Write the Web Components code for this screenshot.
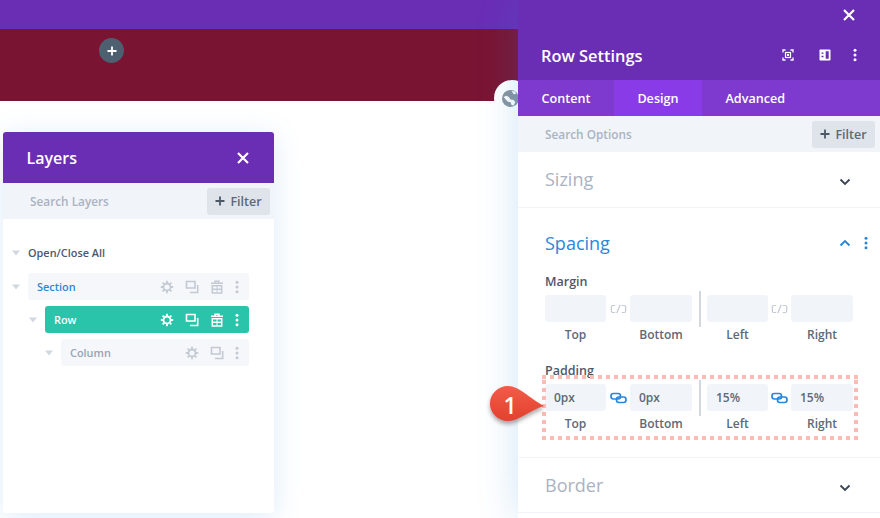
<!DOCTYPE html>
<html>
<head>
<meta charset="utf-8">
<style>
  html, body { margin: 0; padding: 0; width: 880px; height: 518px; overflow: hidden; background: #fff; }
  body { font-family: "Open Sans", sans-serif; }
</style>
</head>
<body>
<app-shell>
  <layers-window slot="canvas"></layers-window>
  <settings-panel slot="panel"></settings-panel>
</app-shell>

<script>
const icons = {
  close: `<svg viewBox="0 0 14 14" width="14" height="14"><path d="M2 2l10 10M12 2L2 12" stroke="currentColor" stroke-width="2.2" fill="none"/></svg>`,
  plus: `<svg viewBox="0 0 10 10" width="10" height="10"><path d="M5 .5v9M.5 5h9" stroke="currentColor" stroke-width="1.8" fill="none"/></svg>`,
  gear: `<svg viewBox="0 0 14 14" width="14" height="14"><circle cx="7" cy="7" r="3.5" fill="none" stroke="currentColor" stroke-width="1.8"/><path d="M7 .8v2.2M7 11v2.2M.8 7H3M11 7h2.200M2.600 2.600l1.500 1.500M9.900 9.900l1.500 1.500M11.400 2.600L9.900 4.100M4.100 9.900l-1.500 1.500" stroke="currentColor" stroke-width="1.800" fill="none"/></svg>`,
  copy: `<svg viewBox="0 0 14 14" width="14" height="14"><path d="M1.500 1.500H10V8H1.500z" fill="none" stroke="currentColor" stroke-width="1.600"/><path d="M12.700 5v7.500H5" fill="none" stroke="currentColor" stroke-width="1.600"/></svg>`,
  trash: `<svg viewBox="0 0 14 14" width="14" height="14"><path d="M1 3.300h12M5 3V1.200h4V3" fill="none" stroke="currentColor" stroke-width="1.400"/><path d="M2.300 5.700h9.400V13H2.300z" fill="none" stroke="currentColor" stroke-width="1.500"/><path d="M2.300 9.300h9.400" stroke="currentColor" stroke-width="1.500"/><path d="M7 6v6.500" stroke="currentColor" stroke-width="1"/></svg>`,
  dots: `<svg viewBox="0 0 4 14" width="4" height="14"><circle cx="2" cy="2.200" r="1.500" fill="currentColor"/><circle cx="2" cy="7" r="1.500" fill="currentColor"/><circle cx="2" cy="11.800" r="1.500" fill="currentColor"/></svg>`,
  focus: `<svg viewBox="0 0 12 12" width="12" height="12"><path d="M3.500 1H1v2.500M8.500 1H11v2.500M3.500 11H1V8.500M8.500 11H11V8.500" fill="none" stroke="currentColor" stroke-width="1.300"/><rect x="3.500" y="3.500" width="5" height="5" fill="none" stroke="currentColor" stroke-width="1.200"/><rect x="5" y="5" width="2" height="2" fill="currentColor"/></svg>`,
  columns: `<svg viewBox="0 0 12 12" width="12" height="12"><rect x=".5" y=".5" width="11" height="11" rx=".8" fill="currentColor"/><path d="M6.700 2.300h3v7.400h-3zM2.500 3.400h2v1.400h-2zM2.500 6.800h2v1.400h-2z" fill="#6a2eb5"/></svg>`,
  down: `<svg viewBox="0 0 12 8" width="12" height="8"><path d="M1.500 1.500L6 6l4.500-4.500" fill="none" stroke="currentColor" stroke-width="1.900"/></svg>`,
  up: `<svg viewBox="0 0 12 8" width="12" height="8"><path d="M1.500 6.500L6 2l4.500 4.500" fill="none" stroke="currentColor" stroke-width="1.900"/></svg>`,
  caret: `<svg viewBox="0 0 8 6" width="8" height="6"><path d="M0 .5h8L4 5.500z" fill="currentColor"/></svg>`,
  linkOn: `<svg viewBox="0 0 17 12" width="17" height="12"><rect x="1" y="1.500" width="9.500" height="5.500" rx="2.400" fill="none" stroke="currentColor" stroke-width="1.700"/><rect x="6.500" y="5" width="9.500" height="5.500" rx="2.400" fill="none" stroke="currentColor" stroke-width="1.700"/></svg>`,
  linkOff: `<svg viewBox="0 0 17 10" width="17" height="10"><path d="M5.200 1.500H2.800C1.900 1.500 1.300 2.100 1.300 3v4c0 .9.6 1.500 1.500 1.500h2.400M11.800 1.500h2.400c.9 0 1.500.6 1.500 1.500v4c0 .9-.6 1.500-1.500 1.500h-2.400M10.200 .8L6.800 9.200" fill="none" stroke="currentColor" stroke-width="1.200"/></svg>`,
  globe: `<svg viewBox="0 0 16 16" width="17" height="17"><circle cx="8" cy="8" r="8" fill="currentColor"/><path d="M1.500 6.500L4 5.500l2.500 1L8 9l3 .5 1.500 2-1.500 3-2-.5-1-2.500-2.500-.5-2-2zM9 1l3 .5 1.500 2-2.500.5z" fill="#fff"/></svg>`
};

class FilterButton extends HTMLElement {
  constructor() {
    super();
    this.attachShadow({ mode: "open" }).innerHTML = `
    <style>
      :host {
        display: flex; align-items: center; justify-content: center; gap: 5px;
        background: #dfe4ea; color: #5c6978; border-radius: 3px;
        font-size: 12.500px; font-weight: 600;
      }
      span { display: flex; color: #4c5866; }
    </style>
    <span>${icons.plus}</span><slot></slot>`;
  }
}
customElements.define("filter-button", FilterButton);

class SearchBar extends HTMLElement {
  constructor() {
    super();
    this.attachShadow({ mode: "open" }).innerHTML = `
    <style>
      :host {
        display: flex; align-items: center; justify-content: space-between;
        background: #f1f4f9; height: 36px; box-sizing: border-box;
        padding: 0 5px 0 27px; color: #a9b3c1;
        font-size: 11.800px; font-weight: 600;
      }
      filter-button { width: 63px; height: 27px; }
    </style>
    <slot></slot><filter-button>Filter</filter-button>`;
  }
}
customElements.define("search-bar", SearchBar);

class LayerRow extends HTMLElement {
  constructor() {
    super();
    const active = this.hasAttribute("active");
    const noTrash = this.hasAttribute("no-trash");
    this.attachShadow({ mode: "open" }).innerHTML = `
    <style>
      :host {
        display: flex; align-items: center; height: 27px;
        margin-left: ${this.getAttribute("indent") || 0}px;
        margin-bottom: 6px; position: relative;
        font-size: 10.900px; font-weight: 600;
      }
      .caret { width: 16px; flex: none; display: flex; color: #d2d8e0; }
      .bar {
        flex: 1; height: 100%; display: flex; align-items: center;
        box-sizing: border-box; padding: 0 10px 0 9px; border-radius: 3px;
        background: ${active ? "#29c4a9" : "#f5f7fb"};
        color: ${active ? "#fff" : this.getAttribute("color") || "#98a4b3"};
      }
      .name { flex: 1; margin-top: -1px; }
      .tools { display: flex; align-items: center; color: ${active ? "#fff" : "#c3cad4"}; }
      .tools span { display: flex; width: 25px; justify-content: center; }
      .tools span.more { width: 10px; justify-content: flex-end; }
    </style>
    <span class="caret">${icons.caret}</span>
    <div class="bar">
      <span class="name"><slot></slot></span>
      <div class="tools">
        <span>${icons.gear}</span><span>${icons.copy}</span>
        ${noTrash ? "" : `<span>${icons.trash}</span>`}
        <span class="more">${icons.dots}</span>
      </div>
    </div>`;
  }
}
customElements.define("layer-row", LayerRow);

class LayersWindow extends HTMLElement {
  constructor() {
    super();
    this.attachShadow({ mode: "open" }).innerHTML = `
    <style>
      :host {
        display: block; position: absolute; left: 3px; top: 31px;
        width: 271px; height: 381px; background: #fff; border-radius: 3px;
        box-shadow: 0 5px 30px rgba(43,135,218,.16);
      }
      header {
        height: 51px; background: #6a2eb5; color: #fff; border-radius: 3px 3px 0 0;
        display: flex; align-items: center; justify-content: space-between;
        padding: 0 24px 0 23.500px; font-size: 16px; font-weight: 600;
      }
      header span { display: flex; }
      search-bar { padding-right: 4px; }
      .list { padding: 25px 25px 0 9px; }
      .all {
        display: flex; align-items: center; height: 17px; margin-bottom: 12px;
        font-size: 10.900px; font-weight: 600; color: #4c5866;
      }
      .all span { display: flex; width: 16px; color: #d2d8e0; }
    </style>
    <header>Layers<span>${icons.close}</span></header>
    <search-bar>Search Layers</search-bar>
    <div class="list">
      <div class="all"><span>${icons.caret}</span>Open/Close All</div>
      <layer-row color="#2b87da">Section</layer-row>
      <layer-row indent="17" active>Row</layer-row>
      <layer-row indent="33" no-trash>Column</layer-row>
    </div>`;
  }
}
customElements.define("layers-window", LayersWindow);

class SectionHead extends HTMLElement {
  constructor() {
    super();
    const open = this.hasAttribute("open");
    this.attachShadow({ mode: "open" }).innerHTML = `
    <style>
      :host {
        display: flex; align-items: center; justify-content: space-between;
        font-size: 18px; font-weight: 400; color: ${open ? "#2b87da" : "#a9b3c1"};
      }
      .tools {
        display: flex; align-items: center; width: 32px; margin-right: -18px;
        color: ${open ? "#2b87da" : "#3c4654"}; ${open ? "" : "padding-top: 5px;"}
      }
      .tools span { display: flex; }
      .more { margin-left: 13px; }
    </style>
    <slot></slot>
    <div class="tools">
      <span>${open ? icons.up : icons.down}</span>
      ${open ? `<span class="more">${icons.dots}</span>` : ""}
    </div>`;
  }
}
customElements.define("section-head", SectionHead);

class SpacingGroup extends HTMLElement {
  constructor() {
    super();
    const values = (this.getAttribute("values") || ",,,").split(",");
    const linked = this.hasAttribute("linked");
    const names = ["Top", "Bottom", "Left", "Right"];
    const link = `<span class="link">${linked ? icons.linkOn : icons.linkOff}</span>`;
    const input = i => `<div class="input">${values[i]}</div>`;
    const name = i => `<div class="name">${names[i]}</div>`;
    this.attachShadow({ mode: "open" }).innerHTML = `
    <style>
      :host { display: block; position: relative; }
      .title { font-size: 12.500px; font-weight: 600; color: #4c5866; height: 18px; line-height: 18px; margin-bottom: 4px; }
      .grid {
        display: grid; grid-template-columns: 61px 24px 62px 15px 61px 23px 62px;
        grid-template-rows: 27px 25px; align-items: center; justify-items: center;
      }
      .input {
        width: 100%; height: 27px; line-height: 27px; background: #f1f4f9; border-radius: 3px;
        box-sizing: border-box; padding-left: 9px; font-size: 12px; font-weight: 600; color: #5c6978;
      }
      .link { display: flex; color: ${linked ? "#2b87da" : "#c3cad4"}; }
      .name { font-size: 12px; font-weight: 600; color: #5c6978; grid-row: 2; }
      .split { grid-column: 4; grid-row: 1 / 3; width: 2px; height: 36px; background: #d3d8de; align-self: start; margin-top: -4px; }
      ${linked ? `:host::after {
        content: ""; position: absolute; left: -3px; right: -5px; top: 13px; height: 65px;
        pointer-events: none;
        background:
          repeating-linear-gradient(90deg, #fcbcb3 0 4px, transparent 4px 8px) top / 100% 4px no-repeat,
          repeating-linear-gradient(90deg, #fcbcb3 0 4px, transparent 4px 8px) bottom / 100% 4px no-repeat,
          repeating-linear-gradient(0deg, #fcbcb3 0 4px, transparent 4px 8px) left / 4px 100% no-repeat,
          repeating-linear-gradient(0deg, #fcbcb3 0 4px, transparent 4px 8px) right / 4px 100% no-repeat;
      }` : ""}
    </style>
    <div class="title"><slot></slot></div>
    <div class="grid">
      ${input(0)}${link}${input(1)}<div class="split"></div>${input(2)}${link}${input(3)}
      <span style="grid-column:1">${name(0)}</span>
      <span style="grid-column:3">${name(1)}</span>
      <span style="grid-column:5">${name(2)}</span>
      <span style="grid-column:7">${name(3)}</span>
    </div>`;
  }
}
customElements.define("spacing-group", SpacingGroup);

class CalloutMarker extends HTMLElement {
  constructor() {
    super();
    this.attachShadow({ mode: "open" }).innerHTML = `
    <style>
      :host { display: block; position: absolute; left: 488px; top: 386px; width: 60px; height: 44px; }
      svg { position: absolute; inset: 0; overflow: visible; filter: drop-shadow(0 3px 2px rgba(60,40,40,.42)); }
      span {
        position: absolute; left: 14px; top: 4px; width: 16px; text-align: center;
        font: 600 23px/30px "Open Sans", sans-serif; color: #fff;
      }
    </style>
    <svg viewBox="0 0 60 44" width="60" height="44">
      <defs><linearGradient id="g" x1="0" y1="0" x2="0" y2="1"><stop offset="0" stop-color="#f25c48"/><stop offset="1" stop-color="#e2412f"/></linearGradient></defs>
      <path d="M20 0C31 0 41 12 56 20 42 24 31 35 20 35 10 35 2 27 2 17.500 2 8 10 0 20 0z" fill="url(#g)"/>
    </svg>
    <span><slot></slot></span>`;
  }
}
customElements.define("callout-marker", CalloutMarker);

class SettingsPanel extends HTMLElement {
  constructor() {
    super();
    this.attachShadow({ mode: "open" }).innerHTML = `
    <style>
      :host {
        display: block; width: 362px; height: 518px; background: #fff; position: relative;
        box-shadow: 0 0 38px rgba(43,135,218,.22); overflow: visible;
      }
      header { height: 80px; background: #6a2eb5; color: #fff; position: relative; }
      .x { position: absolute; right: 24px; top: 8px; display: flex; }
      .title-row {
        position: absolute; left: 23px; right: 23px; top: 43px; display: flex; align-items: center;
        font-size: 16.400px; font-weight: 600; height: 24px;
      }
      .title-row b { flex: 1; font-weight: 600; }
      .title-row span { display: flex; }
      .tabs { height: 36px; background: #7e39cf; display: flex; color: #fff; font-size: 12.600px; font-weight: 600; }
      .tabs div { display: flex; align-items: center; padding: 0 23.500px; }
      .tabs .on { background: #8a3be8; }
      .sec { padding: 0 27px; border-bottom: 1px solid #f1f4f9; box-sizing: border-box; }
      .sizing { height: 56px; padding-top: 15px; }
      .spacing { height: 250px; padding-top: 23px; }
      .border { height: 55px; padding-top: 15px; }
      .spacing spacing-group:first-of-type { margin-top: 18px; margin-bottom: 15px; }
    </style>
    <header>
      <span class="x">${icons.close}</span>
      <div class="title-row">
        <b>Row Settings</b>
        <span style="margin-right:25px">${icons.focus}</span>
        <span style="margin-right:22px">${icons.columns}</span>
        <span>${icons.dots}</span>
      </div>
    </header>
    <div class="tabs">
      <div>Content</div><div class="on">Design</div><div>Advanced</div>
    </div>
    <search-bar>Search Options</search-bar>
    <div class="sec sizing"><section-head>Sizing</section-head></div>
    <div class="sec spacing">
      <section-head open>Spacing</section-head>
      <spacing-group>Margin</spacing-group>
      <spacing-group linked values="0px,0px,15%,15%">Padding</spacing-group>
    </div>
    <div class="sec border"><section-head>Border</section-head></div>`;
  }
}
customElements.define("settings-panel", SettingsPanel);

class AppShell extends HTMLElement {
  constructor() {
    super();
    this.attachShadow({ mode: "open" }).innerHTML = `
    <style>
      :host { display: flex; width: 880px; height: 518px; overflow: hidden; position: relative; }
      .left { width: 518px; flex: none; display: flex; flex-direction: column; }
      .topbar { height: 29px; background: #6a2eb5; }
      .hero {
        height: 72px; background: #7a1433; display: flex; align-items: flex-start;
        box-sizing: border-box; padding: 9px 0 0 99px;
      }
      .add {
        width: 25px; height: 25px; border-radius: 50%; background: #4e5f6f; color: #fff;
        display: flex; align-items: center; justify-content: center;
      }
      .canvas { flex: 1; position: relative; background: #fff; }
      .globe {
        position: absolute; left: 494px; top: 80px; width: 36px; height: 36px; border-radius: 18px;
        background: #fff; color: #8a949e; display: flex; align-items: center; padding-left: 8px; box-sizing: border-box;
      }
      .panel { position: relative; z-index: 1; }
      .pulse { position: absolute; inset: 0; z-index: 2; pointer-events: none; }
    </style>
    <div class="left">
      <div class="topbar"></div>
      <div class="hero"><div class="add">${icons.plus}</div></div>
      <div class="canvas"><slot name="canvas"></slot></div>
    </div>
    <div class="globe">${icons.globe}</div>
    <div class="panel"><slot name="panel"></slot></div>
    <div class="pulse"><callout-marker>1</callout-marker></div>`;
  }
}
customElements.define("app-shell", AppShell);
</script>
</body>
</html>
